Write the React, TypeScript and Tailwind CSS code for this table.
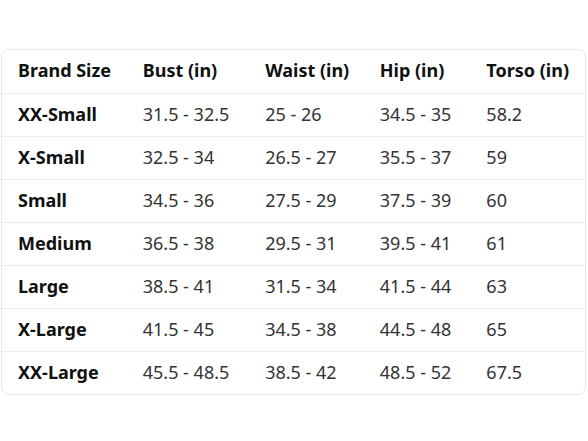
const HEAD = ["Brand Size", "Bust (in)", "Waist (in)", "Hip (in)", "Torso (in)"];

const ROWS = [
  ["XX-Small", "31.5 - 32.5", "25 - 26", "34.5 - 35", "58.2"],
  ["X-Small", "32.5 - 34", "26.5 - 27", "35.5 - 37", "59"],
  ["Small", "34.5 - 36", "27.5 - 29", "37.5 - 39", "60"],
  ["Medium", "36.5 - 38", "29.5 - 31", "39.5 - 41", "61"],
  ["Large", "38.5 - 41", "31.5 - 34", "41.5 - 44", "63"],
  ["X-Large", "41.5 - 45", "34.5 - 38", "44.5 - 48", "65"],
  ["XX-Large", "45.5 - 48.5", "38.5 - 42", "48.5 - 52", "67.5"],
];

const WIDTHS = ["w-[125px]", "w-[123px]", "w-[115px]", "w-[107px]", "w-[115px]"];

export default function App() {
  return (
    <div className="w-[588px] h-[441px] bg-white pt-[49px] pl-px pr-[2px] font-['Noto_Sans',sans-serif] text-[#0f1111]">
      <div className="rounded-lg border border-[#e8e8e8] overflow-hidden">
        <table className="w-full border-collapse text-[18px] leading-none">
          <thead>
            <tr className="h-[43px]">
              {HEAD.map((h, i) => (
                <th key={h} className={`${WIDTHS[i]} text-left font-bold pl-4 pr-0 pb-[2px]`}>{h}</th>
              ))}
            </tr>
          </thead>
          <tbody>
            {ROWS.map((row) => (
              <tr key={row[0]} className="h-[43px] border-t border-[#ececec]">
                {row.map((c, j) => (
                  <td key={j} className={`pl-4 pr-0 pb-[2px] ${j === 0 ? "font-bold" : "text-[#333]"}`}>{c}</td>
                ))}
              </tr>
            ))}
          </tbody>
        </table>
      </div>
    </div>
  );
}
